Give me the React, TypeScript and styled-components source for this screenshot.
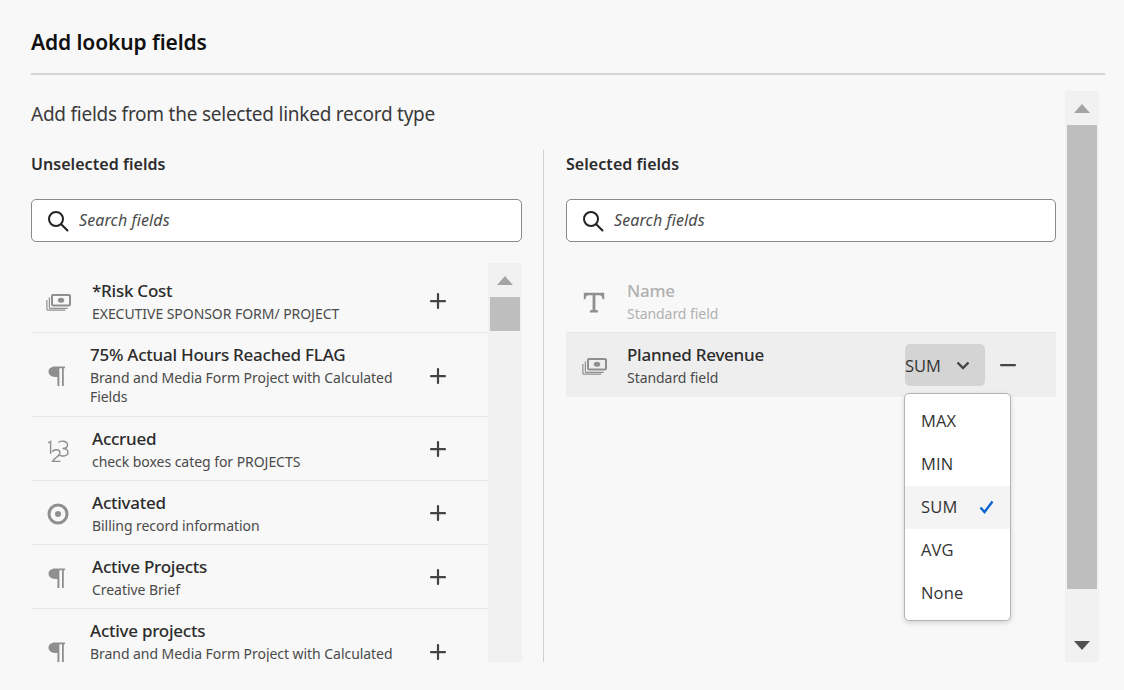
import React from 'react';
import styled, { createGlobalStyle } from 'styled-components';

const GlobalStyle = createGlobalStyle`
  html, body {
    margin: 0;
    padding: 0;
    background: #f8f8f8;
    font-family: 'Noto Sans', Lato, sans-serif;
    color: #2c2c2c;
  }
`;

const Page = styled.div`
  width: 1124px;
  height: 690px;
  padding: 0 19px 0 31px;
  box-sizing: border-box;
  overflow: hidden;
  position: relative;
`;

const Header = styled.header`
  height: 75px;
  border-bottom: 2px solid #d5d5d5;
  box-sizing: border-box;
`;

const Title = styled.h1`
  margin: 0;
  padding-top: 28px;
  font-size: 21px;
  line-height: 28px;
  font-weight: 600;
  color: #111;
  letter-spacing: -0.1px;
`;

const Body = styled.div`
  display: flex;
  height: 571px;
  margin-top: 16px;
`;

const Content = styled.div`
  width: 1034px;
  position: relative;
`;

const Intro = styled.p`
  margin: 0;
  padding-top: 10px;
  font-size: 19px;
  line-height: 26px;
  color: #3a3a3a;
  letter-spacing: -0.24px;
`;

const Columns = styled.div`
  display: flex;
  margin-top: 23px;
  height: 512px;
`;

const LeftColumn = styled.section`
  width: 491px;
  padding-right: 21px;
  border-right: 1px solid #d0d0d0;
  display: flex;
  flex-direction: column;
`;

const RightColumn = styled.section`
  width: 490px;
  margin-left: 22px;
  display: flex;
  flex-direction: column;
`;

const ColumnTitle = styled.h2`
  margin: 1px 0 0;
  font-size: 16px;
  line-height: 26px;
  font-weight: 600;
  color: #2c2c2c;
  letter-spacing: 0.05px;
`;

const SearchBox = styled.div`
  height: 43px;
  margin-top: 22px;
  box-sizing: border-box;
  background: #fff;
  border: 1px solid #8a8a8a;
  border-radius: 5px;
  display: flex;
  align-items: center;
  padding-left: 15px;
  gap: 10px;
  flex-shrink: 0;
`;

const SearchInput = styled.input`
  border: 0;
  outline: 0;
  background: transparent;
  flex: 1;
  font: italic 400 16px 'Noto Sans', sans-serif;
  letter-spacing: 0.1px;
  color: #444;
  padding: 0 0 2px;

  &::placeholder {
    color: #4a4a4a;
    opacity: 1;
  }
`;

const ListWrap = styled.div`
  display: flex;
  height: 399px;
  margin-top: 21px;
`;

const List = styled.div`
  width: 457px;
  overflow: hidden;
  padding-top: 6px;
  box-sizing: border-box;
`;

const Row = styled.div<{ $height?: number; $wide?: boolean }>`
  height: ${(p) => p.$height ?? 64}px;
  box-sizing: border-box;
  border-bottom: 1px solid #e6e6e6;
  display: flex;
  align-items: flex-start;
  padding-top: 9px;
  padding-left: ${(p) => (p.$wide ? 59 : 61)}px;
  position: relative;
`;

const RowIcon = styled.div<{ $top?: number }>`
  position: absolute;
  left: 12px;
  top: ${(p) => p.$top ?? 20}px;
  width: 30px;
  height: 26px;
  color: #8f8f8f;
  display: flex;
  align-items: center;
  justify-content: center;
`;

const RowText = styled.div`
  width: 316px;
`;

const FieldName = styled.div<{ $muted?: boolean }>`
  font-size: 17px;
  line-height: 26px;
  font-weight: 500;
  color: ${(p) => (p.$muted ? '#b1b1b1' : '#2c2c2c')};
  letter-spacing: -0.25px;
`;

const FieldSource = styled.div<{ $muted?: boolean }>`
  font-size: 14px;
  line-height: 19px;
  color: ${(p) => (p.$muted ? '#b1b1b1' : '#4a4a4a')};
  letter-spacing: -0.05px;
`;

const AddButton = styled.button<{ $top?: number; $left?: number }>`
  position: absolute;
  left: ${(p) => p.$left ?? 398}px;
  top: ${(p) => p.$top ?? 23}px;
  width: 18px;
  height: 18px;
  border: 0;
  padding: 0;
  background: transparent;
  color: #444;
  display: flex;
`;

const Scrollbar = styled.div<{ $width: number }>`
  width: ${(p) => p.$width}px;
  background: #f1f1f1;
  display: flex;
  flex-direction: column;
  align-items: center;
  flex-shrink: 0;
`;

const ArrowSlot = styled.div<{ $dark?: boolean }>`
  height: 34px;
  display: flex;
  align-items: center;
  justify-content: center;
  color: ${(p) => (p.$dark ? '#505050' : '#a3a3a3')};
  flex-shrink: 0;
`;

const Thumb = styled.div<{ $height: number }>`
  width: 30px;
  height: ${(p) => p.$height}px;
  background: #bebebe;
  flex-shrink: 0;
`;

const Spacer = styled.div`
  flex: 1;
`;

const SelectedList = styled.div`
  margin-top: 21px;
  padding-top: 6px;
`;

const SelectedRow = styled.div<{ $active?: boolean }>`
  height: 64px;
  box-sizing: border-box;
  display: flex;
  padding-top: 9px;
  padding-left: 61px;
  position: relative;
  background: ${(p) => (p.$active ? '#eeeeee' : 'transparent')};
  border-bottom: ${(p) => (p.$active ? '0' : '1px solid #e6e6e6')};
`;

const SelectedIcon = styled(RowIcon)`
  left: 13px;
`;

const AggregateButton = styled.button`
  position: absolute;
  left: 339px;
  top: 11px;
  width: 80px;
  height: 42px;
  border: 0;
  border-radius: 5px;
  background: #d4d4d4;
  padding: 0;
  display: flex;
  align-items: center;
  font: 400 16.5px 'Open Sans', sans-serif;
  color: #333;
  gap: 15px;
`;

const RemoveButton = styled.button`
  position: absolute;
  left: 433px;
  top: 23px;
  width: 18px;
  height: 18px;
  border: 0;
  padding: 0;
  background: transparent;
  color: #444;
  display: flex;
`;

const Menu = styled.ul`
  position: absolute;
  left: 904px;
  top: 393px;
  width: 107px;
  height: 228px;
  margin: 0;
  padding: 6px 0;
  box-sizing: border-box;
  list-style: none;
  background: #fff;
  border: 1px solid #b4b4b4;
  border-radius: 5px;
  box-shadow: 0 2px 5px rgba(0, 0, 0, 0.15);
`;

const MenuItem = styled.li<{ $selected?: boolean }>`
  height: 43px;
  box-sizing: border-box;
  display: flex;
  align-items: center;
  justify-content: space-between;
  padding: 0 16px 2px;
  font: 400 16.5px 'Open Sans', sans-serif;
  letter-spacing: 0.15px;
  color: #333;
  background: ${(p) => (p.$selected ? '#f4f4f4' : 'transparent')};
`;

const MoneyIcon = () => (
  <svg width="25" height="17" viewBox="0 0 25 17" fill="none" stroke="currentColor" strokeWidth="1.2">
    <rect x="6" y="1" width="18" height="10.4" rx="0.8" strokeWidth="2" />
    <ellipse cx="15" cy="6.2" rx="3.2" ry="2.5" fill="currentColor" stroke="none" />
    <path d="M3.4 3.5v10a.9.9 0 0 0 .9.9h17.4" />
    <path d="M.9 6v9.2a.9.9 0 0 0 .9.9h17.4" />
  </svg>
);

const PilcrowIcon = () => (
  <svg width="20" height="20" viewBox="0 0 20 20" fill="currentColor">
    <path d="M7 .6h10v1.7h-1.2V20H14V2.3h-2.600V20H9.400v-9H7C3 11 .5 8.500.5 5.800S3 .6 7 .6z" />
  </svg>
);

const NumberIcon = () => (
  <svg width="22" height="24" viewBox="0 0 22 24" fill="none" stroke="currentColor" strokeWidth="1.4">
    <path d="M1 5l2.600-1.600V16" />
    <path d="M5.500 14c.6-3 7.500-3.400 7.500 1 0 3-6 5-7.500 8.400h8" />
    <path d="M11.500 4.500C13 2.500 20.500 2.500 20.500 7c0 2.500-2.500 3.500-5 3.500 3 0 5.500 1 5.500 4 0 4-7.500 4.500-9.500 2" />
  </svg>
);

const TargetIcon = () => (
  <svg width="22" height="22" viewBox="0 0 22 22">
    <circle cx="11" cy="11" r="9" fill="none" stroke="currentColor" strokeWidth="3" />
    <circle cx="11" cy="11" r="3" fill="currentColor" />
  </svg>
);

const TextIcon = () => (
  <svg width="22" height="21" viewBox="0 0 22 21" fill="currentColor">
    <path d="M.8.8h20.400v6.400h-1.700c-.3-2.400-1-4-3.400-4h-3.700v14.600l2.600.6v2H7v-2l2.600-.6V3.200H5.900c-2.400 0-3.100 1.600-3.400 4H.8z" />
  </svg>
);

const PlusIcon = () => (
  <svg width="18" height="18" viewBox="0 0 18 18" fill="currentColor">
    <rect x="1" y="8" width="16" height="2.2" rx="1" />
    <rect x="7.9" y="1" width="2.2" height="16" rx="1" />
  </svg>
);

const MinusIcon = () => (
  <svg width="18" height="18" viewBox="0 0 18 18" fill="currentColor">
    <rect x="1" y="8" width="16" height="2.2" rx="1" />
  </svg>
);

const SearchIcon = () => (
  <svg width="22" height="22" viewBox="0 0 22 22" fill="none" stroke="#222" strokeWidth="2">
    <circle cx="9" cy="9" r="7" />
    <path d="M14.2 14.2 20.5 20.5" strokeLinecap="round" />
  </svg>
);

const Caret = ({ down }: { down?: boolean }) => (
  <svg width="16" height="9" viewBox="0 0 16 9" fill="currentColor">
    <path d={down ? 'M0 0h16L8 9z' : 'M8 0l8 9H0z'} />
  </svg>
);

const ChevronIcon = () => (
  <svg width="14" height="9" viewBox="0 0 14 9" fill="none" stroke="#444" strokeWidth="2.4">
    <path d="M1.5 1.5 7 7l5.5-5.5" />
  </svg>
);

const CheckIcon = () => (
  <svg width="15" height="14" viewBox="0 0 15 14" fill="none" stroke="#0d66d0" strokeWidth="2.4">
    <path d="M1.5 7.5 5.5 12 13.5 1.5" />
  </svg>
);

interface Field {
  name: string;
  source: React.ReactNode;
  icon: React.ReactNode;
  height?: number;
  wide?: boolean;
  iconTop?: number;
  addTop?: number;
}

const unselected: Field[] = [
  { name: '*Risk Cost', source: 'EXECUTIVE SPONSOR FORM/ PROJECT', icon: <MoneyIcon /> },
  {
    name: '75% Actual Hours Reached FLAG',
    source: (
      <>
        Brand and Media Form Project with Calculated
        <br />
        Fields
      </>
    ),
    icon: <PilcrowIcon />,
    height: 84,
    wide: true,
    iconTop: 30,
    addTop: 34,
  },
  { name: 'Accrued', source: 'check boxes categ for PROJECTS', icon: <NumberIcon /> },
  { name: 'Activated', source: 'Billing record information', icon: <TargetIcon /> },
  { name: 'Active Projects', source: 'Creative Brief', icon: <PilcrowIcon /> },
  {
    name: 'Active projects',
    source: 'Brand and Media Form Project with Calculated',
    icon: <PilcrowIcon />,
    height: 84,
    wide: true,
    iconTop: 30,
    addTop: 34,
  },
];

const aggregates = ['MAX', 'MIN', 'SUM', 'AVG', 'None'];

const App = () => {
  return (
    <Page>
      <GlobalStyle />
      <Header>
        <Title>Add lookup fields</Title>
      </Header>
      <Body>
        <Content>
          <Intro>Add fields from the selected linked record type</Intro>
          <Columns>
            <LeftColumn>
              <ColumnTitle>Unselected fields</ColumnTitle>
              <SearchBox>
                <SearchIcon />
                <SearchInput placeholder="Search fields" />
              </SearchBox>
              <ListWrap>
                <List>
                  {unselected.map((field) => (
                    <Row key={field.name} $height={field.height} $wide={field.wide}>
                      <RowIcon $top={field.iconTop}>{field.icon}</RowIcon>
                      <RowText>
                        <FieldName>{field.name}</FieldName>
                        <FieldSource>{field.source}</FieldSource>
                      </RowText>
                      <AddButton $top={field.addTop}>
                        <PlusIcon />
                      </AddButton>
                    </Row>
                  ))}
                </List>
                <Scrollbar $width={34}>
                  <ArrowSlot>
                    <Caret />
                  </ArrowSlot>
                  <Thumb $height={34} />
                </Scrollbar>
              </ListWrap>
            </LeftColumn>
            <RightColumn>
              <ColumnTitle>Selected fields</ColumnTitle>
              <SearchBox>
                <SearchIcon />
                <SearchInput placeholder="Search fields" />
              </SearchBox>
              <SelectedList>
                <SelectedRow>
                  <SelectedIcon>
                    <TextIcon />
                  </SelectedIcon>
                  <RowText>
                    <FieldName $muted>Name</FieldName>
                    <FieldSource $muted>Standard field</FieldSource>
                  </RowText>
                </SelectedRow>
                <SelectedRow $active>
                  <SelectedIcon>
                    <MoneyIcon />
                  </SelectedIcon>
                  <RowText>
                    <FieldName>Planned Revenue</FieldName>
                    <FieldSource>Standard field</FieldSource>
                  </RowText>
                  <AggregateButton>
                    SUM
                    <ChevronIcon />
                  </AggregateButton>
                  <RemoveButton>
                    <MinusIcon />
                  </RemoveButton>
                </SelectedRow>
              </SelectedList>
            </RightColumn>
          </Columns>
        </Content>
        <Scrollbar $width={34}>
          <ArrowSlot>
            <Caret />
          </ArrowSlot>
          <Thumb $height={464} />
          <Spacer />
          <ArrowSlot $dark>
            <Caret down />
          </ArrowSlot>
        </Scrollbar>
      </Body>
      <Menu>
        {aggregates.map((item) => (
          <MenuItem key={item} $selected={item === 'SUM'}>
            {item}
            {item === 'SUM' && <CheckIcon />}
          </MenuItem>
        ))}
      </Menu>
    </Page>
  );
};

export default App;
